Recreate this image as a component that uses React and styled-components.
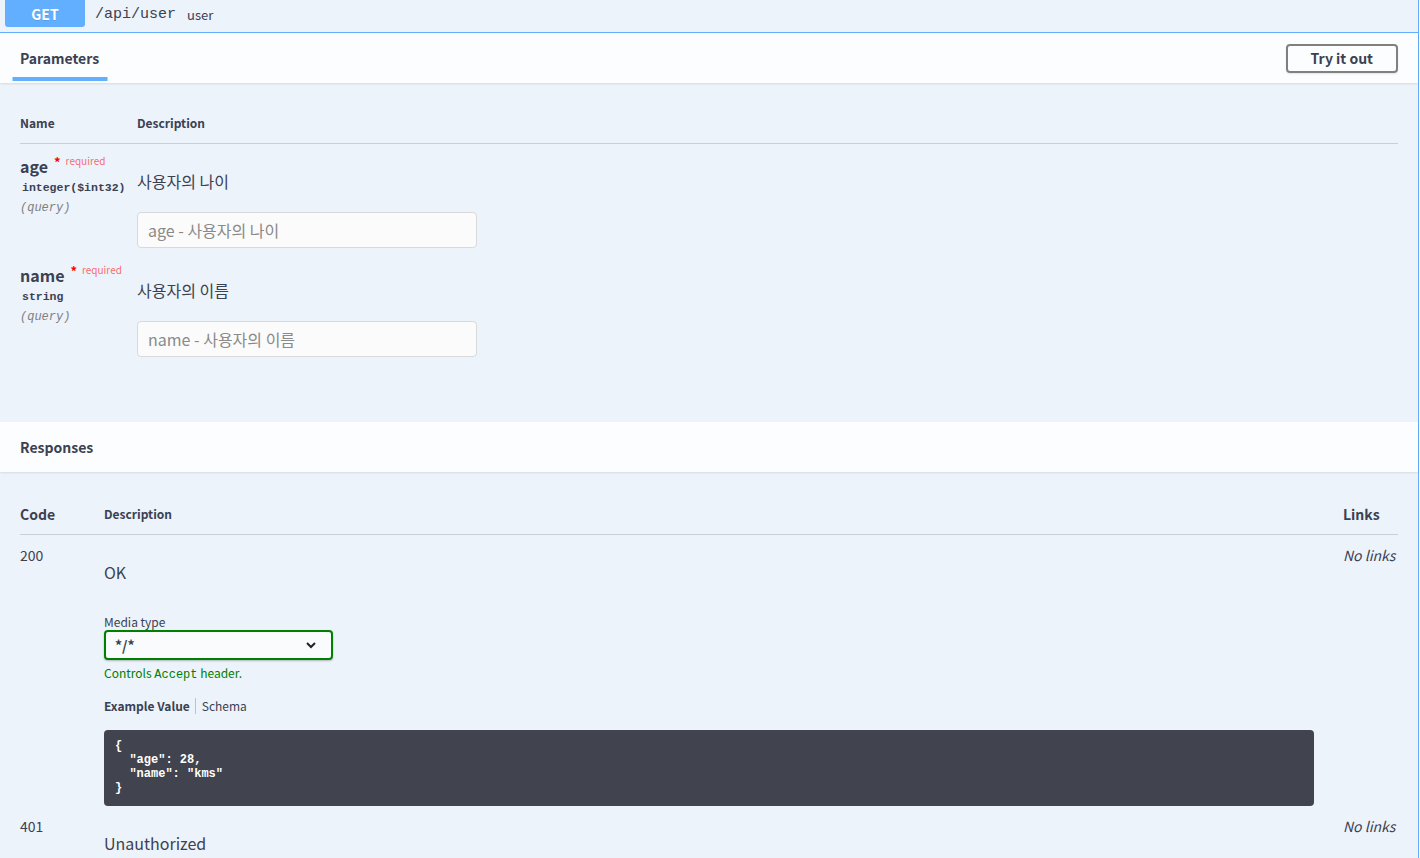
import React from 'react';
import styled, { createGlobalStyle } from 'styled-components';

const sans = `"Noto Sans CJK KR", "Noto Sans", sans-serif`;
const mono = `"Liberation Mono", "DejaVu Sans Mono", monospace`;

const Global = createGlobalStyle`
  html, body { margin: 0; padding: 0; overflow: hidden; background: #fff; }
  body { font-family: ${sans}; color: #3b4151; }
  * { box-sizing: border-box; }
`;

const OpBlock = styled.div`
  width: 1420px;
  margin: -9px 0 0 -1px;
  border: 1px solid #61affe;
  background: #ecf3fb;
`;

const Summary = styled.div`
  display: flex;
  align-items: center;
  padding: 5px;
  border-bottom: 1px solid #61affe;
`;

const Method = styled.span`
  width: 80px;
  height: 30px;
  display: flex;
  align-items: center;
  justify-content: center;
  background: #61affe;
  color: #fff;
  border-radius: 3px;
  font: 700 14px ${sans};
  padding-top: 4px;
  text-shadow: 0 1px 0 rgba(0, 0, 0, 0.1);
`;

const Path = styled.span`
  font: 400 15px ${mono};
  color: #3b4151;
  padding: 4px 0 0 10px;
`;

const PathDesc = styled.span`
  font: 400 13px ${sans};
  padding: 4px 0 0 11px;
`;

const SectionHeader = styled.div`
  min-height: 50px;
  display: flex;
  align-items: center;
  justify-content: space-between;
  padding: 8px 20px;
  background: rgba(255, 255, 255, 0.8);
  box-shadow: 0 1px 2px rgba(0, 0, 0, 0.1);
`;

const SectionTitle = styled.h4`
  margin: 0;
  font: 700 14px/20px ${sans};
  color: #3b4151;
  position: relative;
  ${p => p.$active && `
    &::after {
      content: "";
      position: absolute;
      top: 29px;
      left: 50%;
      transform: translateX(-50%);
      width: 120%;
      height: 4px;
      background: #61affe;
    }
  `}
`;

const TryButton = styled.button`
  font: 700 14px/17px ${sans};
  color: #3b4151;
  background: transparent;
  border: 2px solid #808080;
  border-radius: 4px;
  padding: 4px 23px;
  box-shadow: 0 1px 2px rgba(0, 0, 0, 0.1);
`;

const TableWrap = styled.div`
  padding: ${p => p.$pad};
`;

const HeadRow = styled.div`
  display: grid;
  grid-template-columns: ${p => p.$cols};
  align-items: end;
  padding: ${p => p.$pad || '10px 0'};
  border-bottom: 1px solid rgba(59, 65, 81, 0.2);
`;

const Th = styled.div`
  font: 700 ${p => p.$size || 12}px/20px ${sans};
  color: #3b4151;
`;

const Row = styled.div`
  display: grid;
  grid-template-columns: ${p => p.$cols};
  padding-top: 10px;
`;

const ParamName = styled.div`
  font: 700 16px/24px ${sans};
  color: #3b4151;
  white-space: nowrap;
`;

const Star = styled.span`
  color: red;
  font-size: 13px;
  position: relative;
  top: -6px;
  padding-left: 6px;
`;

const Required = styled.span`
  color: rgba(255, 0, 0, 0.6);
  font: 400 10px ${sans};
  position: relative;
  top: -8px;
  padding-left: 5px;
`;

const ParamType = styled.div`
  font: 700 11.5px/16px ${mono};
  padding-left: 2px;
  white-space: nowrap;
`;

const ParamIn = styled.div`
  font: italic 400 12px/16px ${mono};
  color: #808080;
  margin-top: 4px;
`;

const Markdown = styled.p`
  margin: 16px 0 0;
  font: 400 16px/22px ${sans};
  color: #3b4151;
`;

const TextInput = styled.input`
  display: block;
  width: 340px;
  height: 36px;
  margin: 20px 0 5px;
  padding: 0 10px;
  background: #fbfbfb;
  border: 1px solid #d9d9d9;
  border-radius: 4px;
  font: 400 16px ${sans};
  color: #3b4151;
  &::placeholder { color: #8a8a8a; }
`;

const Code = styled.div`
  font: 400 14px/20px ${sans};
`;

const NoLinks = styled.i`
  font: italic 400 14px/20px ${sans};
  color: #3b4151;
`;

const DescCol = styled.div`
  padding-right: 29px;
`;

const Label = styled.div`
  margin-top: 31px;
  font: 400 12px/16px ${sans};
`;

const Select = styled.div`
  width: 229px;
  height: 30px;
  display: flex;
  align-items: center;
  justify-content: space-between;
  padding: 0 14px 0 9px;
  border: 2px solid green;
  border-radius: 4px;
  background: #f9fbfd;
  box-shadow: 0 1px 2px rgba(0, 0, 0, 0.25);
  font: 700 14px ${sans};
`;

const Hint = styled.div`
  margin-top: 5px;
  font: 400 12px/16px ${sans};
  color: green;
  code { font: 400 12px ${mono}; }
`;

const Tabs = styled.div`
  margin-top: 16px;
  display: flex;
  align-items: center;
  font: 400 12px/16px ${sans};
`;

const TabItem = styled.span`
  font-weight: ${p => (p.$active ? 700 : 400)};
  color: #3b4151;
  & + & {
    border-left: 1px solid rgba(0, 0, 0, 0.2);
    margin-left: 5px;
    padding-left: 6px;
  }
`;

const CodeBlock = styled.pre`
  margin: 16px 0 0;
  padding: 9px 11px 11px;
  background: #41444e;
  border-radius: 4px;
  color: #fff;
  font: 700 12px/14px ${mono};
`;

const Chevron = () => (
  <svg width="12" height="8" viewBox="0 0 12 8">
    <path d="M2 2 L6 6 L10 2" fill="none" stroke="#222" strokeWidth="2" />
  </svg>
);

const params = [
  { name: 'age', type: 'integer($int32)', desc: '사용자의 나이' },
  { name: 'name', type: 'string', desc: '사용자의 이름' },
];

const pcols = '117px 1fr';
const rcols = '84px 1fr 55px';

export default function App() {
  return (
    <>
      <Global />
      <OpBlock>
        <Summary>
          <Method>GET</Method>
          <Path>/api/user</Path>
          <PathDesc>user</PathDesc>
        </Summary>

        <SectionHeader>
          <SectionTitle $active>Parameters</SectionTitle>
          <TryButton>Try it out</TryButton>
        </SectionHeader>

        <TableWrap $pad="20px 20px 60px">
          <HeadRow $cols={pcols}>
            <Th>Name</Th>
            <Th>Description</Th>
          </HeadRow>
          {params.map(p => (
            <Row key={p.name} $cols={pcols}>
              <div>
                <ParamName>
                  {p.name}
                  <Star>*</Star>
                  <Required>required</Required>
                </ParamName>
                <ParamType>{p.type}</ParamType>
                <ParamIn>(query)</ParamIn>
              </div>
              <div>
                <Markdown>{p.desc}</Markdown>
                <TextInput placeholder={`${p.name} - ${p.desc}`} />
              </div>
            </Row>
          ))}
        </TableWrap>

        <SectionHeader>
          <SectionTitle>Responses</SectionTitle>
        </SectionHeader>

        <TableWrap $pad="20px 20px 80px">
          <HeadRow $cols={rcols} $pad="12px 0 10px">
            <Th $size={14}>Code</Th>
            <Th>Description</Th>
            <Th $size={14}>Links</Th>
          </HeadRow>
          <Row $cols={rcols}>
            <Code>200</Code>
            <DescCol>
              <Markdown>OK</Markdown>
              <Label>Media type</Label>
              <Select>
                <span>*/*</span>
                <Chevron />
              </Select>
              <Hint>
                Controls <code>Accept</code> header.
              </Hint>
              <Tabs>
                <TabItem $active>Example Value</TabItem>
                <TabItem>Schema</TabItem>
              </Tabs>
              <CodeBlock>{`{
  "age": 28,
  "name": "kms"
}`}</CodeBlock>
            </DescCol>
            <NoLinks>No links</NoLinks>
          </Row>
          <Row $cols={rcols}>
            <Code>401</Code>
            <DescCol>
              <Markdown>Unauthorized</Markdown>
            </DescCol>
            <NoLinks>No links</NoLinks>
          </Row>
        </TableWrap>
      </OpBlock>
    </>
  );
}
